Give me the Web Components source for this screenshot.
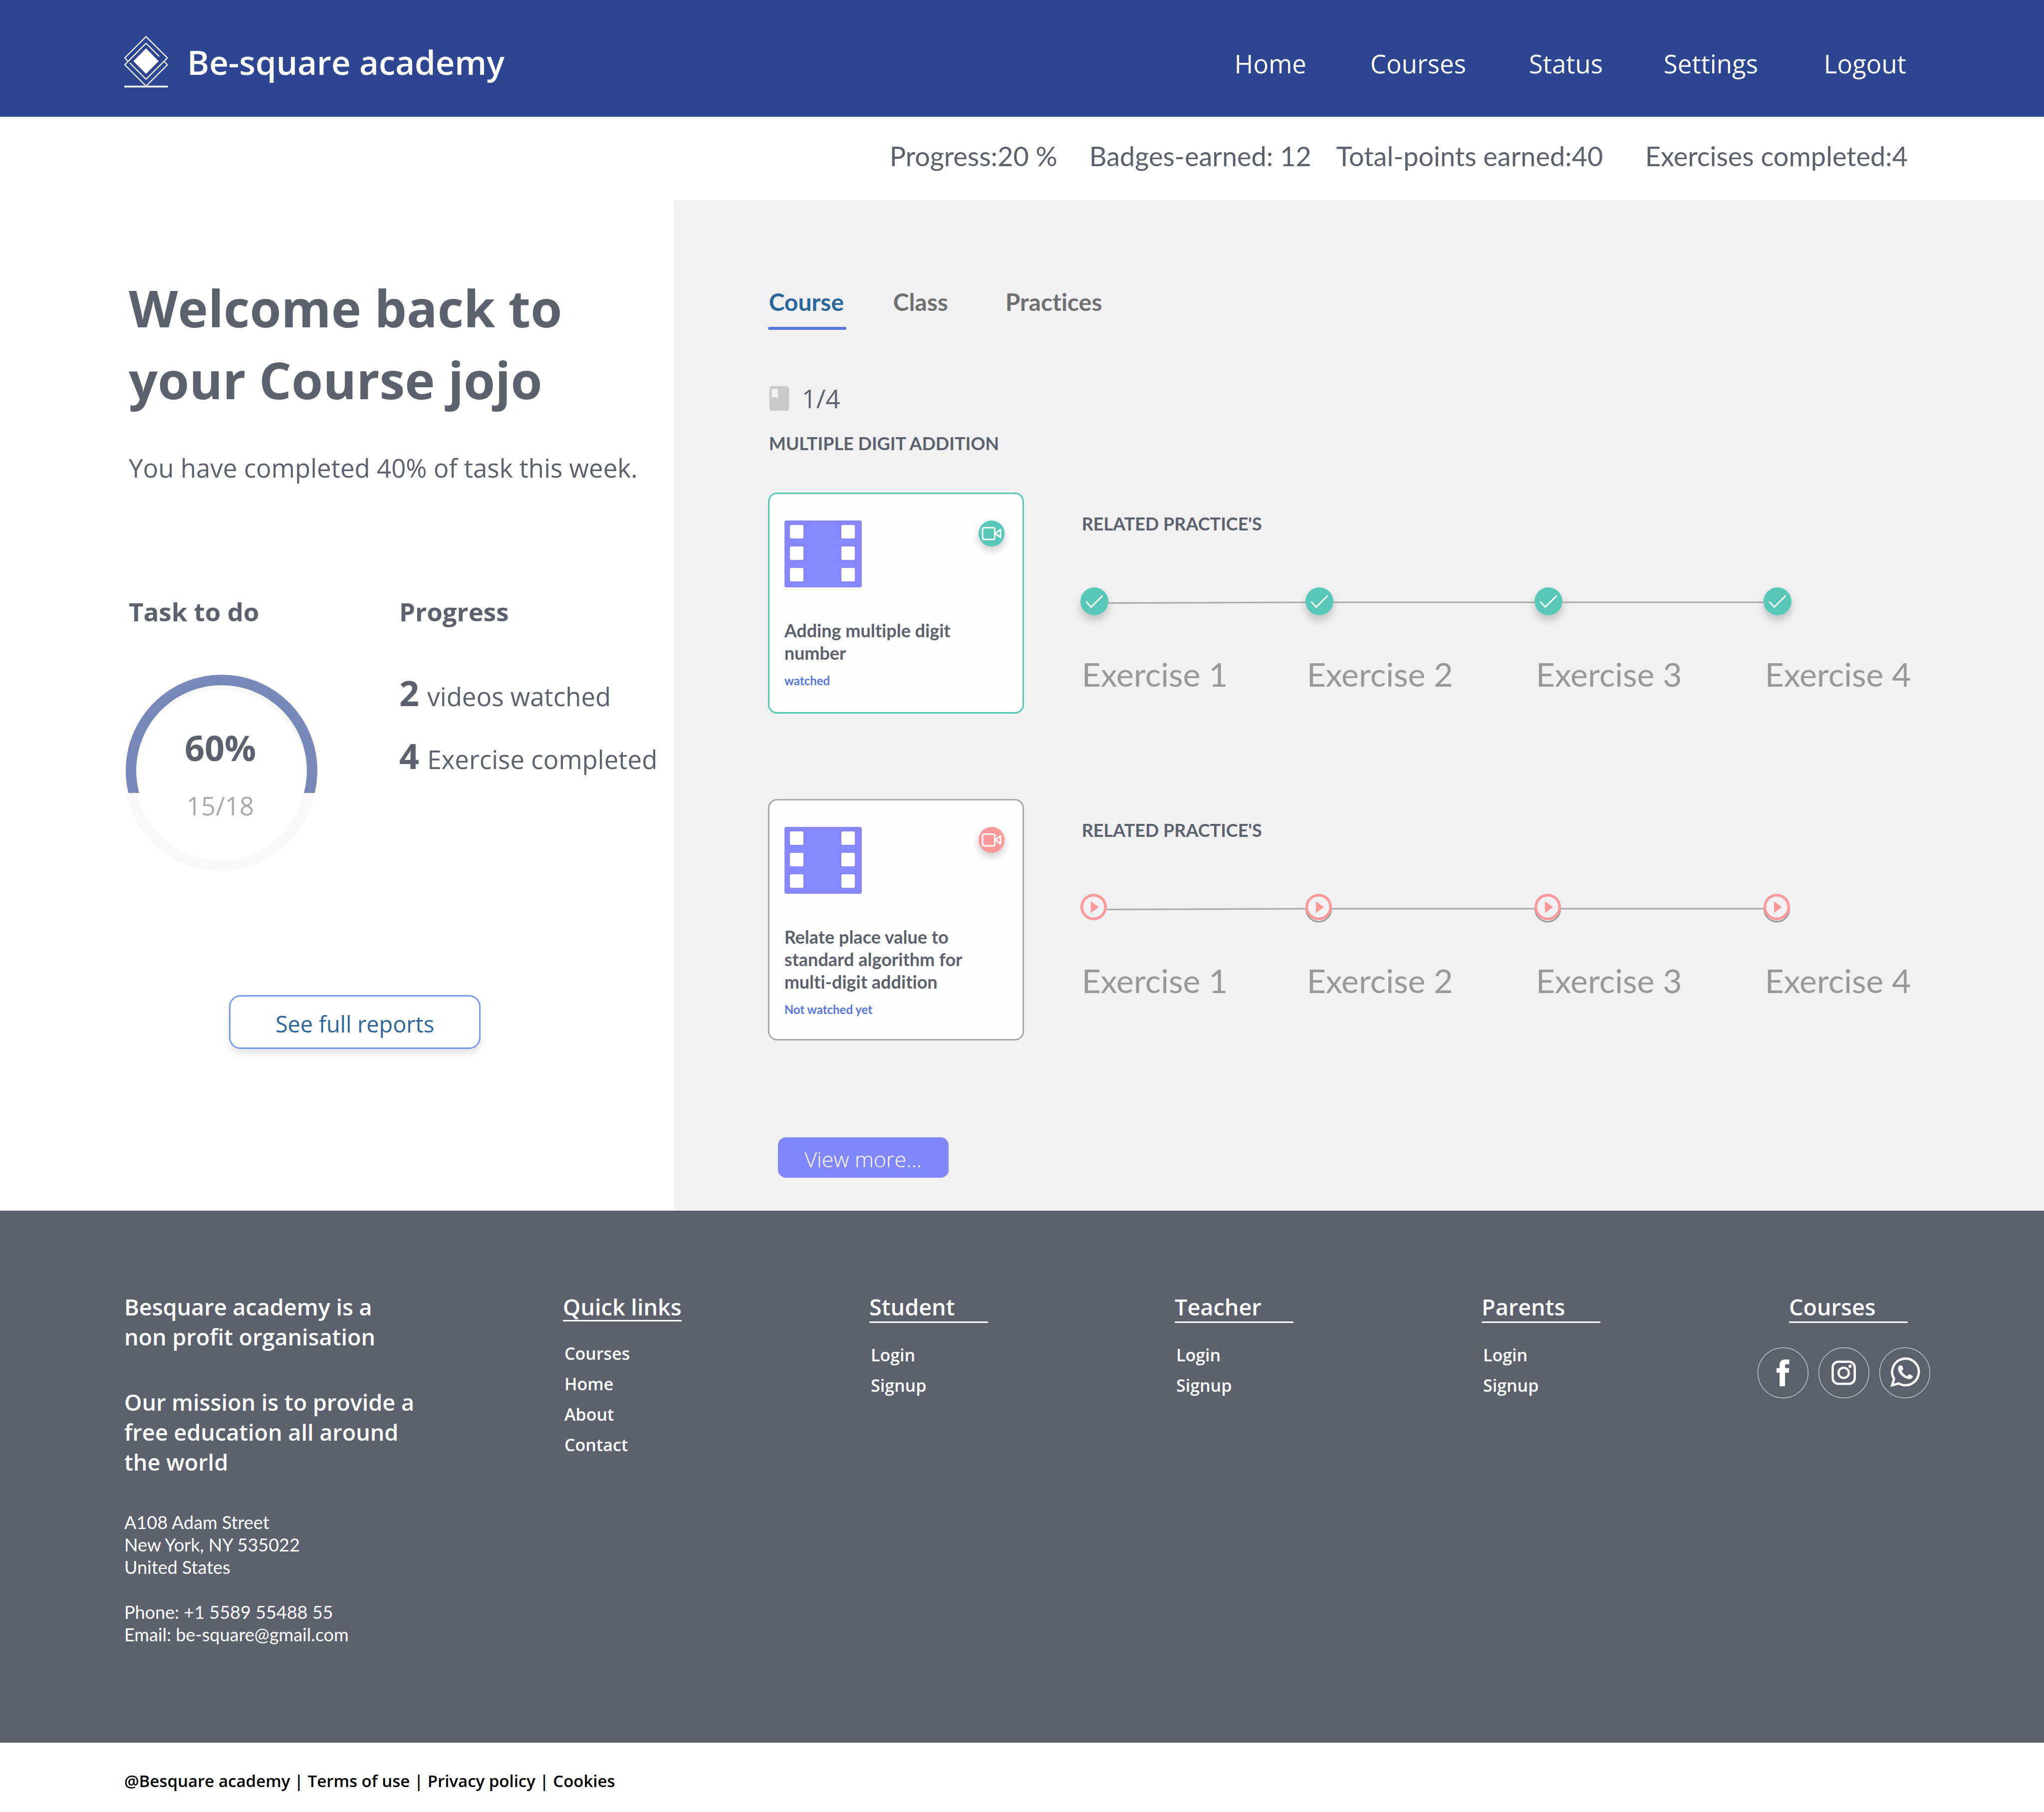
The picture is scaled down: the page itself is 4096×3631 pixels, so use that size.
<!DOCTYPE html>
<html lang="en">
<head>
<meta charset="utf-8">
<title>Be-square academy</title>
<style>
  html, body { margin: 0; }
  body {
    --ui: "Open Sans", "Noto Sans", sans-serif;
    --alt: Lato, "Open Sans", sans-serif;
    --ink: #5b616d;
    --navy: #2e4692;
    --accent: #5575e0;
    --green: #57c7b6;
    --pink: #ff9999;
    --mute: #a9a9a9;
    --panel: #f1f1f3;
    font-family: var(--ui);
    font-variant-ligatures: none;
    color: var(--ink);
    background: #fff;
  }
  main { display: grid; grid-template-columns: 32.95% 1fr; }
</style>
</head>
<body>
<academy-header></academy-header>
<stats-bar>
  <span>Progress:20 %</span>
  <span>Badges-earned: 12</span>
  <span>Total-points earned:40</span>
  <span>Exercises completed:4</span>
</stats-bar>
<main>
  <welcome-panel></welcome-panel>
  <course-panel>
    <lesson-row>
      <lesson-card state="done" slot="card">Adding multiple digit number<span slot="status">watched</span></lesson-card>
      <practice-step state="done" slope>Exercise 1</practice-step>
      <practice-step state="done">Exercise 2</practice-step>
      <practice-step state="done">Exercise 3</practice-step>
      <practice-step state="done" last>Exercise 4</practice-step>
    </lesson-row>
    <lesson-row>
      <lesson-card state="todo" slot="card">Relate place value to standard algorithm for multi-digit addition<span slot="status">Not watched yet</span></lesson-card>
      <practice-step state="next" slope>Exercise 1</practice-step>
      <practice-step state="todo">Exercise 2</practice-step>
      <practice-step state="todo">Exercise 3</practice-step>
      <practice-step state="todo" last>Exercise 4</practice-step>
    </lesson-row>
  </course-panel>
</main>
<academy-footer></academy-footer>

<script>
class Base extends HTMLElement {
  constructor() {
    super();
    this.attachShadow({ mode: "open" });
  }
  connectedCallback() {
    this.shadowRoot.innerHTML = "<style>*{box-sizing:border-box}:host{box-sizing:border-box}" + this.css() + "</style>" + this.html();
  }
}

customElements.define("academy-header", class extends Base {
  css() { return `
    :host { display: block; background: var(--navy); color: #fff; }
    header { display: flex; align-items: center; justify-content: space-between; padding: 72px 276px 58px 249px; }
    .brand { display: flex; align-items: center; gap: 38px; color: inherit; text-decoration: none; font-size: 67px; font-weight: 600; line-height: 96px; }
    svg { width: 88px; height: 104px; display: block; }
    nav { display: grid; grid-template-columns: 272px 318px 270px 321px auto; font-size: 51px; line-height: 72px; padding-top: 6px; }
    nav a { color: inherit; text-decoration: none; }
  `; }
  html() { return `
    <header>
      <a class="brand" href="#">
        <svg viewBox="0 0 88 104" fill="none" stroke="#fff" stroke-width="2.2" stroke-linejoin="round" stroke-linecap="round" aria-hidden="true">
          <path d="M69.4 40.5 43.7 14.8 1 57.7 43.7 100.5 86.5 57.7 80.5 51.8"/>
          <path d="M11.8 54.8 43.7 86.7 86.5 44 43.7 1.4 1 44 7 50.4"/>
          <path d="M43.7 25 69 50.5 43.7 76 18.3 50.5z" fill="#fff" stroke="none"/>
          <path d="M0 101.5H87.5" stroke-width="3.4" stroke-linecap="butt"/>
        </svg>
        <span>Be-square academy</span>
      </a>
      <nav>
        <a href="#">Home</a><a href="#">Courses</a><a href="#">Status</a><a href="#">Settings</a><a href="#">Logout</a>
      </nav>
    </header>`; }
});

customElements.define("stats-bar", class extends Base {
  css() { return `
    :host { display: grid; grid-template-columns: 400px 495px 619px auto; justify-content: end; padding: 47px 273px 56px;
      font: 54px/64px var(--alt); font-variant-ligatures: none; background: #fff; white-space: nowrap; }
  `; }
  html() { return `<slot></slot>`; }
});

customElements.define("progress-ring", class extends Base {
  css() { return `
    :host { display: grid; width: 387px; }
    svg, .value { grid-area: 1 / 1; }
    svg { display: block; width: 387px; height: 394px; }
    .value { padding: 98px 4px 0 0; display: grid; justify-items: center; align-content: start; gap: 32px; }
    ::slotted(*) { white-space: nowrap; }
  `; }
  html() { return `
    <svg viewBox="0 0 387 394" fill="none" stroke-width="21" aria-hidden="true">
      <circle cx="192" cy="201.500" r="181.500" stroke="#f8f8f8"/>
      <clipPath id="top"><rect width="387" height="237"/></clipPath>
      <circle cx="194" cy="192" r="181.500" stroke="var(--navy)" stroke-opacity=".64" clip-path="url(#top)"/>
    </svg>
    <div class="value"><slot></slot></div>`; }
});

customElements.define("welcome-panel", class extends Base {
  css() { return `
    :host { display: block; padding: 144px 0 0 258px; background: #fff; white-space: nowrap; }
    h1 { margin: 0; font-size: 102px; line-height: 144px; font-weight: 700; }
    .sub { margin: 68px 0 216px; font-size: 51px; line-height: 72px; }
    .cols { display: grid; grid-template-columns: 542px 1fr; align-items: start; }
    h2 { margin: 0; font-size: 51px; line-height: 72px; font-weight: 700; }
    progress-ring { margin: 91px 0 0 -8px; }
    .pct { font-size: 70px; line-height: 96px; font-weight: 700; }
    .frac { font-size: 51px; line-height: 72px; color: var(--mute); }
    ul { list-style: none; margin: 86px 0 0; padding: 0; display: grid; gap: 30px; font-size: 51px; line-height: 96px; }
    strong { font-size: 70px; line-height: 1px; font-weight: 700; margin-right: 3px; }
    button { display: block; width: 504px; height: 108px; margin: 248px 0 0 201px; padding: 8px 0 0; background: #fff; border: 3px solid #749bf8;
      border-radius: 23px; font: 45px/64px var(--ui); color: #2d6799; box-shadow: 0 10px 14px rgba(0,0,0,.1); }
  `; }
  html() { return `
    <h1>Welcome back to<br>your Course jojo</h1>
    <p class="sub">You have completed 40% of task this week.</p>
    <div class="cols">
      <section>
        <h2>Task to do</h2>
        <progress-ring><span class="pct">60%</span><span class="frac">15/18</span></progress-ring>
      </section>
      <section>
        <h2>Progress</h2>
        <ul><li><strong>2</strong> videos watched</li><li><strong>4</strong> Exercise completed</li></ul>
      </section>
    </div>
    <button type="button">See full reports</button>`; }
});

customElements.define("course-panel", class extends Base {
  css() { return `
    :host { display: block; background: var(--panel); padding: 174px 0 66px 189px; }
    nav { display: grid; grid-template-columns: 249px 225px auto; justify-content: start; font: 700 48px/60px var(--alt); font-variant-ligatures: none; }
    nav a { justify-self: start; color: #707070; text-decoration: none; padding: 0 4px 20px 2px; }
    nav a.on { color: #2a679b; }
    nav a.on::after { content: ""; display: block; height: 6px; border-radius: 3px; background: var(--accent); margin: 20px -5px -26px -2px; }
    .count { display: flex; align-items: center; gap: 26px; margin-top: 107px; padding-left: 3px; font-size: 51px; line-height: 72px; }
    .count svg { width: 39px; height: 49px; display: block; }
    h2 { margin: 32px 0 77px 2px; font: 700 36px/44px var(--alt); font-variant-ligatures: none; }
    .lessons { display: grid; gap: 171px; }
    button { display: block; width: 342px; height: 81px; margin: 194px 0 0 20px; border: 0; padding: 6px 0 0; border-radius: 16px; background: #8087fb; color: #fff;
      font: 300 43px/60px var(--ui); }
  `; }
  html() { return `
    <nav><a class="on" href="#">Course</a><a href="#">Class</a><a href="#">Practices</a></nav>
    <div class="count">
      <svg viewBox="0 0 39 49" aria-hidden="true"><path fill="#cac8c9" fill-rule="evenodd" d="M5 0H34a5 5 0 0 1 5 5V44a5 5 0 0 1-5 5H5a5 5 0 0 1-5-5V5a5 5 0 0 1 5-5zM4.700 5V24.500L10.700 20.800 16.800 24.500V5z"/></svg>
      <span>1/4</span>
    </div>
    <h2>MULTIPLE DIGIT ADDITION</h2>
    <div class="lessons"><slot></slot></div>
    <button type="button">View more...</button>`; }
});

customElements.define("lesson-row", class extends Base {
  css() { return `
    :host { display: grid; grid-template-columns: 513px 1fr; column-gap: 113px; align-items: start; }
    section { padding-top: 40px; }
    h3 { margin: 0 0 106px 3px; font: 700 36px/44px var(--alt); }
    .track { display: grid; grid-template-columns: 451px 459px 459px auto; justify-content: start; }
  `; }
  html() { return `
    <slot name="card"></slot>
    <section><h3>RELATED PRACTICE'S</h3><div class="track"><slot></slot></div></section>`; }
});

customElements.define("lesson-card", class extends Base {
  css() { return `
    :host { display: block; min-height: 443px; background: #fefefe; border: 3px solid var(--mute); border-radius: 18px; padding: 53px 36px 44px 30px; }
    :host([state="done"]) { border-color: var(--green); }
    .top { display: flex; justify-content: space-between; align-items: flex-start; margin-bottom: 64px; }
    svg { display: block; }
    .film { width: 155px; height: 134px; }
    .cam { width: 52px; height: 52px; border-radius: 50%; background: var(--pink); box-shadow: 0 8px 16px rgba(0,0,0,.2); }
    :host([state="done"]) .cam { background: var(--green); }
    .title { font: 700 36px/45px var(--alt); font-variant-ligatures: none; max-width: 390px; }
    .status { margin-top: 18px; font: 700 24px/30px var(--alt); color: var(--accent); }
  `; }
  html() {
    let holes = "";
    for (const x of [11, 114]) for (const y of [9, 52, 95]) holes += `<rect x="${x}" y="${y}" width="27" height="27" rx="3" fill="#fff"/>`;
    return `
    <div class="top">
      <svg class="film" viewBox="0 0 155 134" aria-hidden="true"><rect width="155" height="134" rx="4" fill="#8787ff"/>${holes}</svg>
      <svg class="cam" viewBox="0 0 52 52" fill="none" stroke="#fff" stroke-width="3" stroke-linejoin="round" aria-hidden="true">
        <rect x="8" y="14.500" width="24.500" height="23.500" rx="3"/><path d="M33.500 26 44 18V34z"/></svg>
    </div>
    <div class="title"><slot></slot></div>
    <div class="status"><slot name="status"></slot></div>`;
  }
});

customElements.define("practice-step", class extends Base {
  css() { return `
    :host { display: block; font: 66px/80px var(--alt); color: #989898; white-space: nowrap; }
    .row { display: flex; align-items: center; height: 56px; margin-bottom: 78px; }
    svg { display: block; flex: none; width: 56px; height: 56px; overflow: visible; }
    .done { border-radius: 50%; box-shadow: 0 10px 16px rgba(0,0,0,.2); }
    .line { flex: 1; width: auto; min-width: 0; height: 8px; margin-top: 3px; overflow: hidden; }
    .play { width: 53px; }
    .label { padding-left: 3px; }
  `; }
  html() {
    const state = this.getAttribute("state");
    const icon = state === "done"
      ? `<svg class="done" viewBox="0 0 56 56" aria-hidden="true"><circle cx="28" cy="28" r="28" fill="var(--green)"/><path d="M11.500 28.500 21.500 39.500 44.500 16.500" fill="none" stroke="#fff" stroke-width="3"/></svg>`
      : `<svg class="play" viewBox="0 0 53 56" aria-hidden="true">${state === "todo" ? `<circle cx="26.500" cy="31" r="25" fill="none" stroke="#9b9b9b" stroke-width="3"/>` : ""}
         <circle cx="26.500" cy="26.500" r="23.800" fill="var(--panel)" stroke="var(--pink)" stroke-width="5.400"/><path d="M21 15V38.500L37 26.700z" fill="var(--pink)"/></svg>`;
    const start = this.hasAttribute("slope") ? 5.5 : 4;
    const line = this.hasAttribute("last") ? "" :
      `<svg class="line" viewBox="0 0 100 8" preserveAspectRatio="none" aria-hidden="true"><path d="M0 ${start}L100 4" stroke="var(--mute)" stroke-width="3" vector-effect="non-scaling-stroke"/></svg>`;
    return `<div class="row">${icon}${line}</div><div class="label"><slot></slot></div>`;
  }
});

customElements.define("footer-column", class extends Base {
  css() { return `
    :host { display: block; }
    h3 { margin: 0; width: 238px; height: 63px; border-bottom: 3px solid #fff; font-size: 45px; line-height: 62px; font-weight: 600; white-space: nowrap; }
    .items { display: grid; justify-items: start; padding: 34px 0 0 3px; }
    :host([tight]) h3 { height: 60px; }
    :host([social]) h3 { margin-left: 63px; }
    :host([social]) .items { display: flex; gap: 20px; padding: 49px 0 0; }
  `; }
  html() { return `<h3>${this.getAttribute("heading")}</h3><div class="items"><slot></slot></div>`; }
});

customElements.define("academy-footer", class extends Base {
  css() { return `
    :host { display: block; }
    footer { background: var(--ink); color: #fff; display: grid; grid-template-columns: 879px 614px 612px 615px 553px auto; justify-content: start; align-items: start;
      padding: 162px 0 194px 249px; }
    section { padding-top: 1px; }
    p { margin: 0 0 71px; font-size: 45px; line-height: 60px; font-weight: 600; }
    p + p { margin-bottom: 68px; }
    address { font: 36px/45px var(--alt); font-variant-ligatures: none; }
    address div + div { margin-top: 45px; }
    footer-column > a { color: inherit; text-decoration: none; font-size: 34px; line-height: 61px; font-weight: 600; }
    footer-column[social] > a { width: 102px; height: 102px; }
    svg { display: block; width: 102px; height: 102px; }
    .legal { padding: 53px 0 38px 249px; background: #fff; color: #000; font-size: 33px; line-height: 48px; font-weight: 600; }
    .legal a { color: inherit; text-decoration: none; }
  `; }
  html() {
    const ring = `<circle cx="51" cy="51" r="50.300" fill="none" stroke="#dcdde0" stroke-width="1.200"/>`;
    return `
    <footer>
      <section>
        <p>Besquare academy is a<br>non profit organisation</p>
        <p>Our mission is to provide a<br>free education all around<br>the world</p>
        <address>
          <div>A108 Adam Street<br>New York, NY 535022<br>United States</div>
          <div>Phone: +1 5589 55488 55<br>Email: be-square@gmail.com</div>
        </address>
      </section>
      <footer-column heading="Quick links" tight><a href="#">Courses</a><a href="#">Home</a><a href="#">About</a><a href="#">Contact</a></footer-column>
      <footer-column heading="Student"><a href="#">Login</a><a href="#">Signup</a></footer-column>
      <footer-column heading="Teacher"><a href="#">Login</a><a href="#">Signup</a></footer-column>
      <footer-column heading="Parents"><a href="#">Login</a><a href="#">Signup</a></footer-column>
      <footer-column heading="Courses" social>
        <a href="#" aria-label="Facebook"><svg viewBox="0 0 102 102">${ring}<path fill="#fff" d="M44.200 77.700V50.700H38V41.500H44.200V35C44.200 28 48.500 24.200 55 24.200H63.400V33.700H57.800C55.800 33.700 55.100 34.500 55.100 36.200V41.500H63.400L62.800 50.700H55.100V77.700z"/></svg></a>
        <a href="#" aria-label="Instagram"><svg viewBox="0 0 102 102" fill="none" stroke="#fff" stroke-width="4.500">${ring}<rect x="28.500" y="28.700" width="44.300" height="44.300" rx="11.500"/><circle cx="50.600" cy="51" r="10.300"/><circle cx="63.400" cy="37.700" r="3.200" fill="#fff" stroke="none"/></svg></a>
        <a href="#" aria-label="WhatsApp"><svg viewBox="0 0 102 102">${ring}<path fill="none" stroke="#fff" stroke-width="4.600" d="M39 72.200A26.700 26.700 0 1 0 29.500 62.800L25.600 76z"/><path fill="#fff" d="M40.500 36.200H44.500C45.300 36.200 45.700 36.600 46 37.400L47.800 42.200C48.100 43.100 48 43.800 47.400 44.500L44.900 47.800C47 52 51 56 55.800 58L58.800 54.400C59.300 53.800 59.800 53.700 60.600 54L66 56.700C66.900 57.100 67.300 57.500 67.200 58.400C66.800 61.500 63.500 63.400 60 63.400C49 62.800 37.500 51.500 37.500 42.500C37.500 39.800 38.500 37.400 40.500 36.200z"/></svg></a>
      </footer-column>
    </footer>
    <div class="legal">@Besquare academy | <a href="#">Terms of use</a> | <a href="#">Privacy policy</a> | <a href="#">Cookies</a></div>`;
  }
});
</script>
</body>
</html>
